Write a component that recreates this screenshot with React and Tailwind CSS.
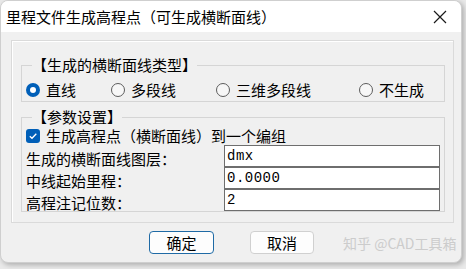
import React, { useState } from 'react';

const cjk = { fontFamily: '"Noto Sans CJK SC", "Noto Sans", sans-serif' };

function Radio({ checked, label, onClick, width }) {
  return (
    <div className={`flex items-center ${width}`} onClick={onClick}>
      {checked ? (
        <span className="w-[14px] h-[14px] rounded-full bg-[#005fb8] flex items-center justify-center">
          <span className="w-[6px] h-[6px] rounded-full bg-white" />
        </span>
      ) : (
        <span className="w-[14px] h-[14px] rounded-full border border-[#5c5c5c] bg-[#f7f7f7]" />
      )}
      <span className="ml-[6px] text-[15px] leading-[20px] text-black">{label}</span>
    </div>
  );
}

export default function App() {
  const [lineType, setLineType] = useState('直线');
  const [grouped, setGrouped] = useState(true);
  const [layer, setLayer] = useState('dmx');
  const [station, setStation] = useState('0.0000');
  const [digits, setDigits] = useState('2');

  const rows = [
    { label: '生成的横断面线图层：', value: layer, set: setLayer },
    { label: '中线起始里程：', value: station, set: setStation },
    { label: '高程注记位数：', value: digits, set: setDigits },
  ];

  return (
    <div className="w-[466px] h-[269px] bg-[#e9e9e9]" style={cjk}>
      <div className="w-[462px] h-[263px] rounded-[8px] overflow-hidden bg-[#f0f0f0] border border-[#cfcfcf] shadow-[2px_2px_5px_rgba(0,0,0,0.25)] flex flex-col">
        {/* title bar */}
        <div className="h-[31px] bg-white flex items-center justify-between pl-[5px] pr-[12px] shrink-0">
          <span className="text-[15px] leading-[20px] text-black">里程文件生成高程点（可生成横断面线）</span>
          <svg width="14" height="14" viewBox="0 0 14 14" className="mr-[2px]">
            <path d="M1 1 L13 13 M13 1 L1 13" stroke="#1a1a1a" strokeWidth="1.2" />
          </svg>
        </div>

        {/* outer frame */}
        <div className="mt-[8px] ml-[10px] w-[443px] h-[183px] border border-[#dadada] shadow-[inset_1px_1px_0_#ffffff] pl-[9px] pr-[8px] pt-[14px]">
          <fieldset className="border border-[#d5d5d5] pl-[4px] pr-[4px]">
            <legend className="ml-[6px] text-[15px] leading-[20px] text-black px-0">【生成的横断面线类型】</legend>
            <div className="flex items-center h-[22px] mt-[4px]">
              {['直线', '多段线', '三维多段线', '不生成'].map((t, i) => (
                <Radio
                  key={t}
                  label={t}
                  checked={lineType === t}
                  onClick={() => setLineType(t)}
                  width={['w-[85px]', 'w-[105px]', 'w-[143px]', 'w-[80px]'][i]}
                />
              ))}
            </div>
          </fieldset>

          <fieldset className="mt-[5px] border border-[#d5d5d5] pl-[4px] pr-[3px]">
            <legend className="ml-[6px] text-[15px] leading-[20px] text-black px-0">【参数设置】</legend>
            <div className="flex items-center h-[18px] cursor-pointer" onClick={() => setGrouped(!grouped)}>
              <span className={`w-[14px] h-[14px] rounded-[3px] flex items-center justify-center ${grouped ? 'bg-[#005fb8]' : 'border border-[#5c5c5c] bg-white'}`}>
                {grouped && (
                  <svg width="10" height="10" viewBox="0 0 10 10">
                    <path d="M1.8 5.2 L4 7.3 L8.3 2.7" fill="none" stroke="white" strokeWidth="1.3" />
                  </svg>
                )}
              </span>
              <span className="ml-[6px] text-[15px] leading-[20px] text-black">生成高程点（横断面线）到一个编组</span>
            </div>
            {rows.map((r) => (
              <div key={r.label} className="flex items-center h-[22px]">
                <span className="w-[198px] pt-[5px] text-[15px] leading-[20px] text-black">{r.label}</span>
                <input
                  value={r.value}
                  onChange={(e) => r.set(e.target.value)}
                  className="w-[216px] h-[22px] border border-[#6e6e6e] bg-white px-[2px] text-[14px] text-black outline-none"
                  style={{ fontFamily: '"Liberation Mono", monospace', letterSpacing: '0.5px' }}
                />
              </div>
            ))}
          </fieldset>
        </div>

        {/* buttons */}
        <div className="flex items-center mt-[8px] pl-[148px]">
          <button className="w-[65px] h-[23px] rounded-[4px] border border-[#1f6aa5] bg-[#fdfdfd] text-[15px] leading-[20px] text-black">确定</button>
          <button className="ml-[36px] w-[64px] h-[23px] rounded-[4px] border border-[#d0d0d0] bg-[#fdfdfd] text-[15px] leading-[20px] text-black">取消</button>
          <span className="ml-[29px] whitespace-nowrap text-[14px] leading-[20px] text-[#cccccc]">知乎 @CAD工具箱</span>
        </div>
      </div>
    </div>
  );
}
